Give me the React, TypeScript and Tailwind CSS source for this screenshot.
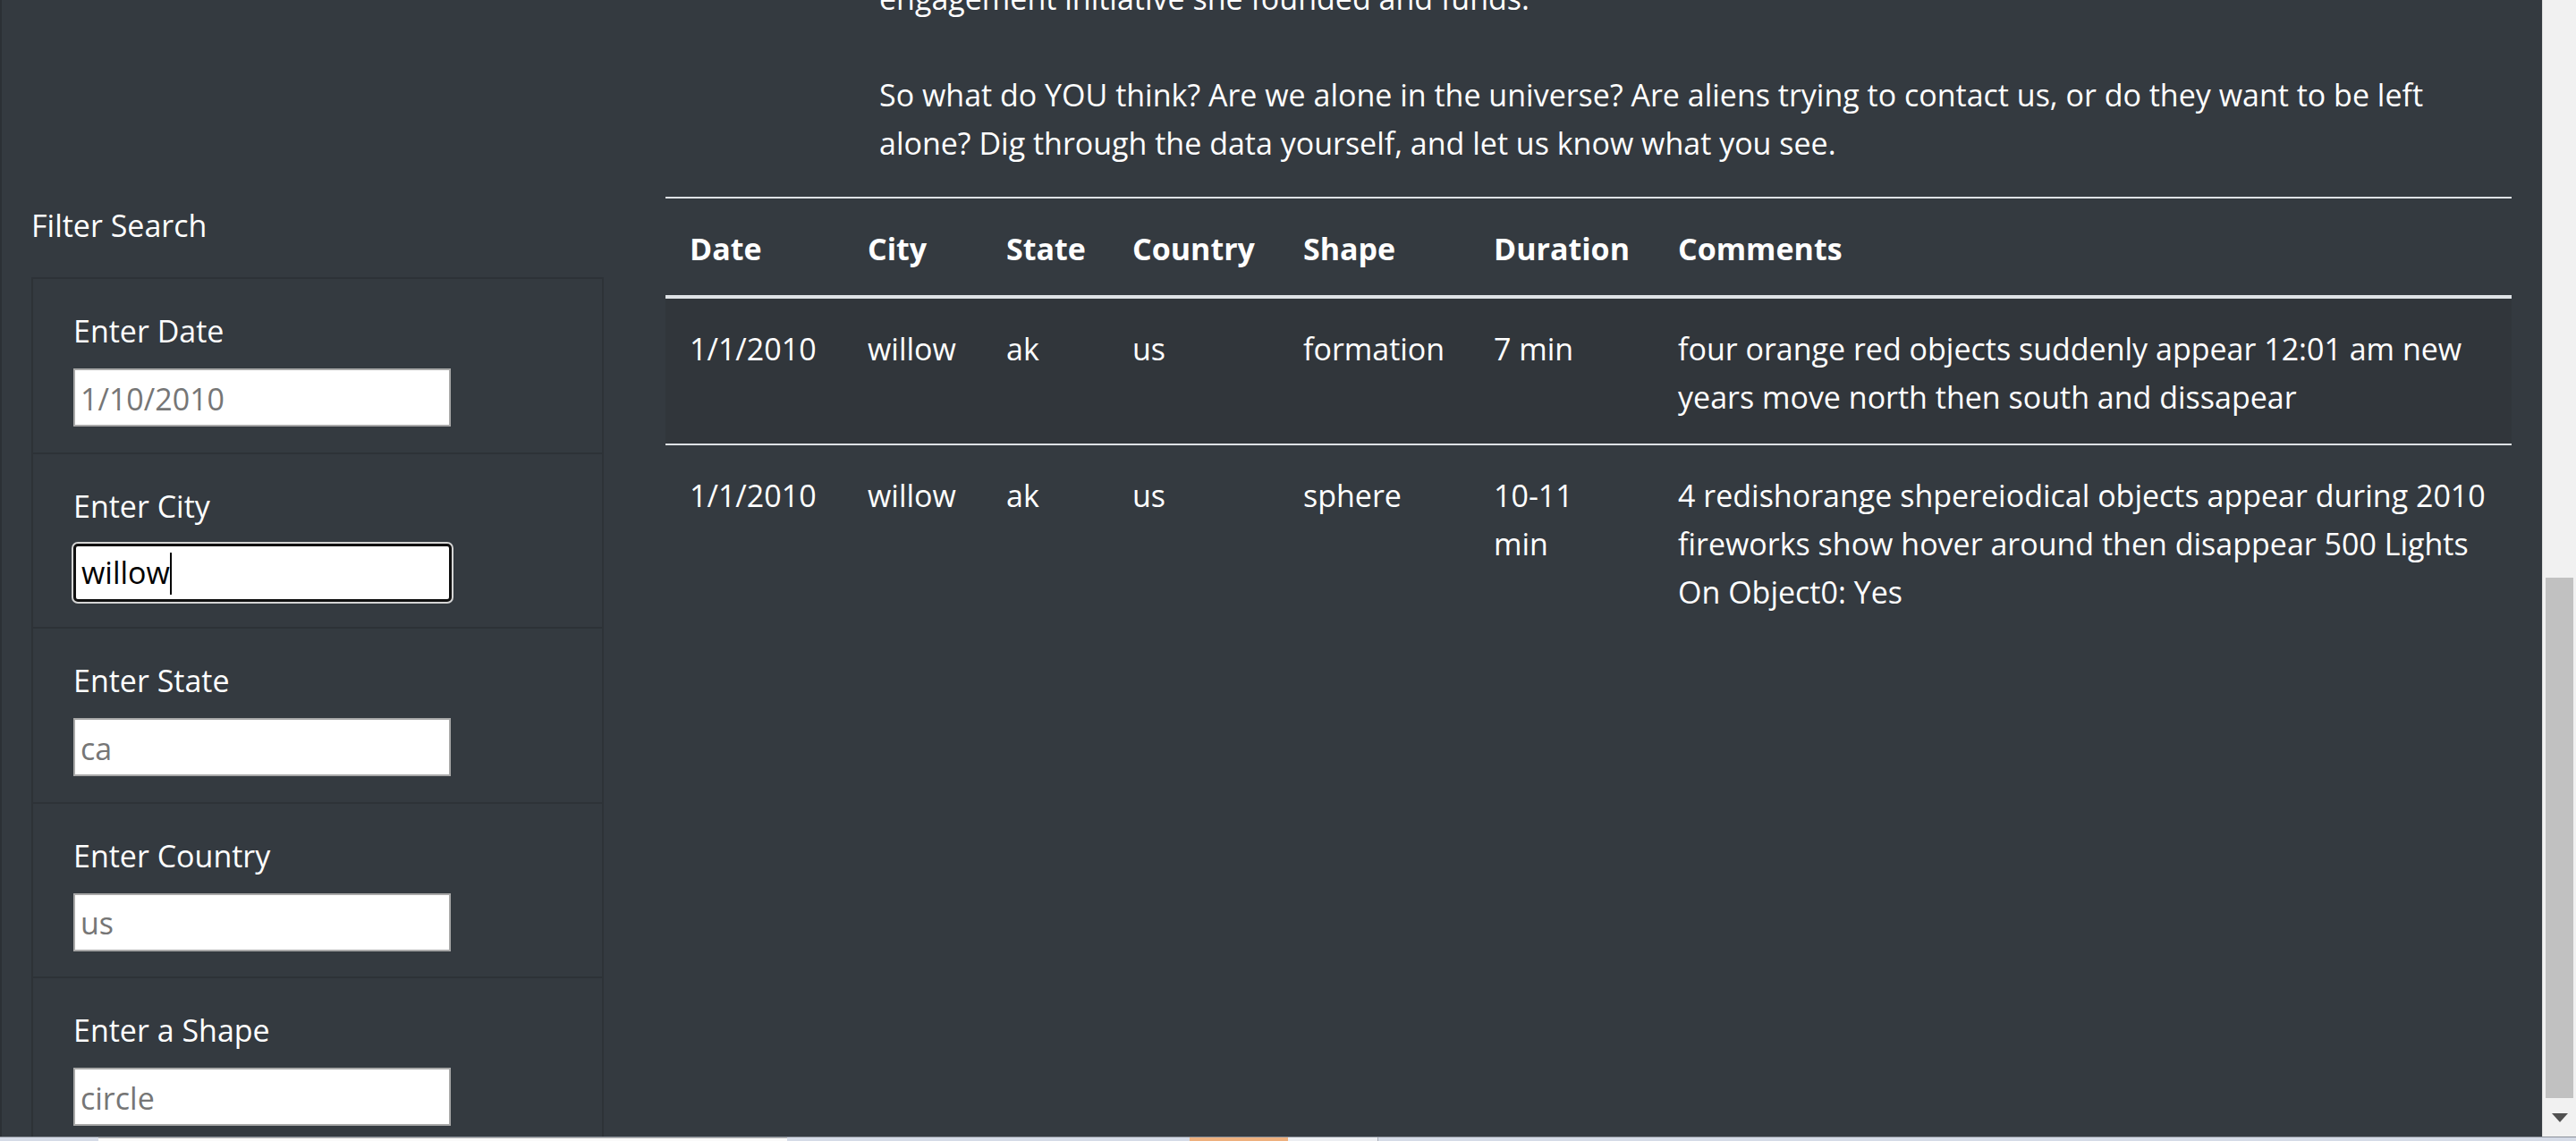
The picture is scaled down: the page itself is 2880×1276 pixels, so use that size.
import React from "react";

const filters = [
  { label: "Enter Date", placeholder: "1/10/2010" },
  { label: "Enter City", value: "willow", focused: true },
  { label: "Enter State", placeholder: "ca" },
  { label: "Enter Country", placeholder: "us" },
  { label: "Enter a Shape", placeholder: "circle" },
];

const headers = ["Date", "City", "State", "Country", "Shape", "Duration", "Comments"];

function FilterItem({
  label,
  placeholder,
  value,
  focused,
  first,
}: {
  label: string;
  placeholder?: string;
  value?: string;
  focused?: boolean;
  first?: boolean;
}) {
  return (
    <li
      className={
        "list-none pl-[45px] pr-[45px] pt-[31px] pb-[28.5px] " +
        (first ? "" : "border-t-2 border-[#2d3237]")
      }
    >
      <label className="block mb-[15px] whitespace-nowrap">{label}</label>
      {focused ? (
        <div className="relative w-[423px] h-[65px]">
          <input
            type="text"
            readOnly
            value={value}
            className="w-full h-full bg-white text-black border-[3px] border-[#111111] rounded-[5px] pl-[6px] outline-none shadow-[0_0_0_2px_#d4d4d4] leading-[54px]"
          />
          <span className="absolute left-[108px] top-[10px] w-[2px] h-[47px] bg-black" />
        </div>
      ) : (
        <input
          type="text"
          placeholder={placeholder}
          className="block w-[422px] h-[65px] bg-white text-black border-2 border-[#a8a8a8] pl-[6px] pt-[2px] outline-none placeholder:text-[#767676] leading-[54px]"
        />
      )}
    </li>
  );
}

const cell = "px-[27px] pt-[29px] pb-[25px] align-top whitespace-nowrap";
const cellB = cell + " border-t-2 border-[#dee2e6]";

export default function App() {
  return (
    <div className="w-[2880px] h-[1276px] overflow-hidden flex flex-col bg-[#343a40] font-['Open_Sans',sans-serif] text-[34px] leading-[54px] text-white">
      <div className="flex h-[1271px]">
        {/* page */}
        <div className="flex-1 overflow-hidden shadow-[inset_2px_0_0_#2b3035]">
          {/* intro row */}
          <div className="flex">
            <div className="w-[710px] shrink-0" />
            <div className="flex-1 px-[34px]">
              <p className="mt-[-29px] mb-[33px] pl-[239px] whitespace-nowrap">
                engagement initiative she founded and funds.
                <br />
                <br />
                So what do YOU think? Are we alone in the universe? Are aliens trying to contact us, or do they want to be left
                <br />
                alone? Dig through the data yourself, and let us know what you see.
              </p>
            </div>
          </div>

          {/* main row */}
          <div className="flex">
            <aside className="w-[710px] shrink-0 px-[35px] pt-[5px]">
              <p className="mb-[31px]">Filter Search</p>
              <ul className="border-2 border-[#2d3237] h-[1000px]">
                {filters.map((f, i) => (
                  <FilterItem key={f.label} {...f} first={i === 0} />
                ))}
              </ul>
            </aside>

            <main className="flex-1 px-[34px]">
              <table className="table-fixed w-full border-separate border-spacing-0 text-left">
                <colgroup>
                  <col className="w-[199px]" />
                  <col className="w-[155px]" />
                  <col className="w-[141px]" />
                  <col className="w-[191px]" />
                  <col className="w-[213px]" />
                  <col className="w-[206px]" />
                  <col />
                </colgroup>
                <thead>
                  <tr>
                    {headers.map((h) => (
                      <th
                        key={h}
                        className="font-bold px-[27px] pt-[29px] pb-[25px] border-t-2 border-b-[4px] border-[#dee2e6] whitespace-nowrap align-bottom"
                      >
                        {h}
                      </th>
                    ))}
                  </tr>
                </thead>
                <tbody>
                  <tr className="bg-[#31363b]">
                    <td className={cell}>1/1/2010</td>
                    <td className={cell}>willow</td>
                    <td className={cell}>ak</td>
                    <td className={cell}>us</td>
                    <td className={cell}>formation</td>
                    <td className={cell}>7 min</td>
                    <td className={cell}>
                      four orange red objects suddenly appear 12:01 am new
                      <br />
                      years move north then south and dissapear
                    </td>
                  </tr>
                  <tr>
                    <td className={cellB}>1/1/2010</td>
                    <td className={cellB}>willow</td>
                    <td className={cellB}>ak</td>
                    <td className={cellB}>us</td>
                    <td className={cellB}>sphere</td>
                    <td className={cellB}>
                      10-11
                      <br />
                      min
                    </td>
                    <td className={cellB}>
                      4 redishorange shpereiodical objects appear during 2010
                      <br />
                      fireworks show hover around then disappear 500 Lights
                      <br />
                      On Object0: Yes
                    </td>
                  </tr>
                </tbody>
              </table>
            </main>
          </div>
        </div>

        {/* scrollbar */}
        <div className="w-[38px] shrink-0 bg-[#f1f1f1] border-l border-[#dcdcdc] flex flex-col">
          <div className="h-[646px]" />
          <div className="mx-[3px] h-[582px] bg-[#c1c1c1]" />
          <div className="flex-1 flex items-center justify-center">
            <svg width="18" height="10" viewBox="0 0 18 10">
              <polygon points="0,0 18,0 9,10" fill="#505050" />
            </svg>
          </div>
        </div>
      </div>

      {/* bottom strip */}
      <div className="h-[5px] flex border-t border-[#8a9099] bg-[#d5dbe7]">
        <div className="w-[110px]" />
        <div className="w-[770px] bg-[#fafafa] border-t border-[#b4b4b4]" />
        <div className="w-[450px]" />
        <div className="w-[110px] bg-[#eeb07e]" />
        <div className="w-[101px] bg-[#eceef2] border-r border-[#a8adb5]" />
        <div className="flex-1" />
      </div>
    </div>
  );
}
